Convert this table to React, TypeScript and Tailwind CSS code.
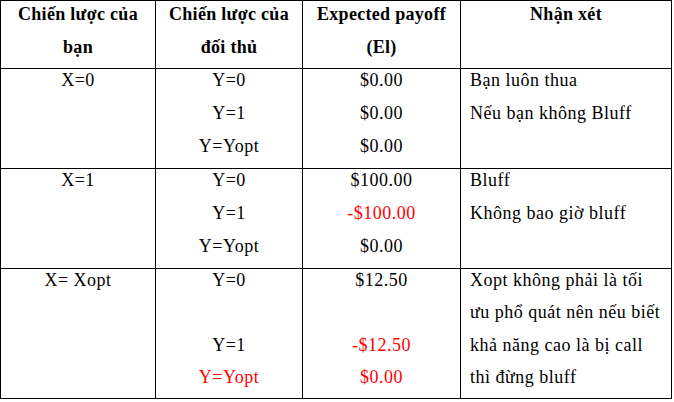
import React from "react";

type L = { t: string; red?: boolean };

const Line = ({ l, head }: { l: L; head?: boolean }) => (
  <div
    className={
      (head ? "pt-[3px] tracking-[0.3px] " : "pt-[1px] tracking-[0.5px] ") +
      "h-[33px] leading-[20px] whitespace-nowrap font-['Liberation_Serif','Times_New_Roman',serif] " +
      (l.red ? "text-[#ff0000]" : "text-black")
    }
  >
    {l.t || "\u00a0"}
  </div>
);

const Cell = ({
  lines,
  head,
  left,
}: {
  lines: L[];
  head?: boolean;
  left?: boolean;
}) => (
  <div
    className={
      "bg-white flex flex-col overflow-hidden " +
      (left ? "items-start pl-[9px] " : "items-center ") +
      (head ? "font-bold" : "font-normal")
    }
  >
    {lines.map((l, i) => (
      <Line key={i} l={l} head={head} />
    ))}
  </div>
);

const s = (t: string, red?: boolean): L => ({ t, red });

export default function App() {
  return (
    <div className="w-[674px] h-[402px] bg-white font-['Liberation_Serif','Times_New_Roman',serif]">
      <div className="grid grid-cols-[154px_146px_157px_210px] grid-rows-[67px_99px_99px_129px] gap-px bg-black p-px w-[672px] text-[18px]">
        <Cell head lines={[s("Chiến lược của"), s("bạn")]} />
        <Cell head lines={[s("Chiến lược của"), s("đối thủ")]} />
        <Cell head lines={[s("Expected payoff"), s("(El)")]} />
        <Cell head lines={[s("Nhận xét")]} />

        <Cell lines={[s("X=0")]} />
        <Cell lines={[s("Y=0"), s("Y=1"), s("Y=Yopt")]} />
        <Cell lines={[s("$0.00"), s("$0.00"), s("$0.00")]} />
        <Cell left lines={[s("Bạn luôn thua"), s("Nếu bạn không Bluff")]} />

        <Cell lines={[s("X=1")]} />
        <Cell lines={[s("Y=0"), s("Y=1"), s("Y=Yopt")]} />
        <Cell lines={[s("$100.00"), s("-$100.00", true), s("$0.00")]} />
        <Cell left lines={[s("Bluff"), s("Không bao giờ bluff")]} />

        <Cell lines={[s("X= Xopt")]} />
        <Cell lines={[s("Y=0"), s(""), s("Y=1"), s("Y=Yopt", true)]} />
        <Cell lines={[s("$12.50"), s(""), s("-$12.50", true), s("$0.00", true)]} />
        <Cell
          left
          lines={[
            s("Xopt không phải là tối"),
            s("ưu phổ quát nên nếu biết"),
            s("khả năng cao là bị call"),
            s("thì đừng bluff"),
          ]}
        />
      </div>
    </div>
  );
}
